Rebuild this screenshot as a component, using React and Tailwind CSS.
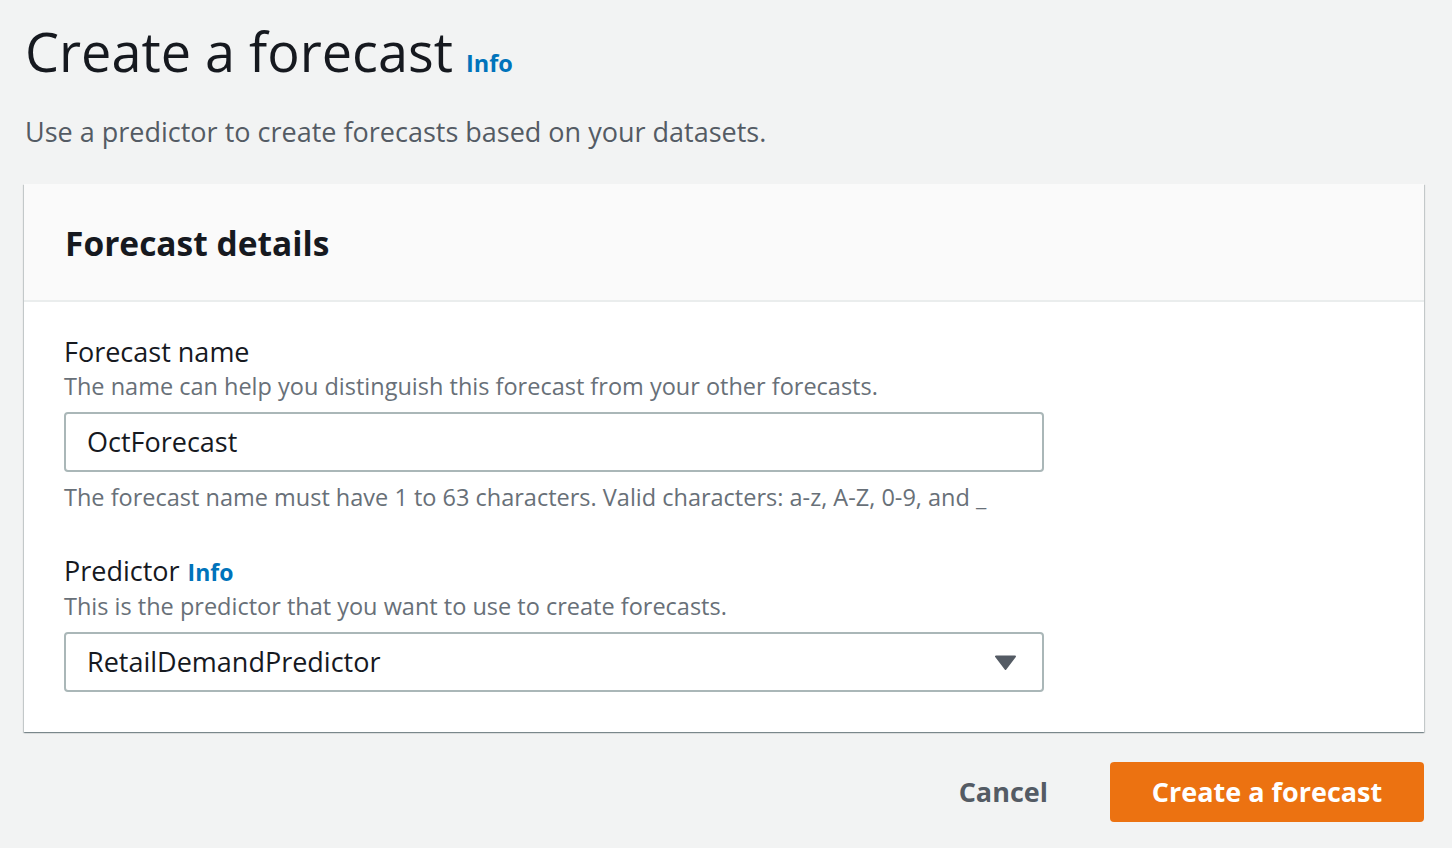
import React from 'react';

const font = { fontFamily: '"Open Sans", "Noto Sans", Arial, sans-serif' };

const InfoLink = ({ className = '' }) => (
  <a href="#" className={`font-bold text-[#0073bb] ${className}`}>Info</a>
);

const Field = ({ label, info, description, children, constraint }) => (
  <div>
    <div className="text-[27px] leading-[36px] text-[#16191f]">
      {label}
      {info && <InfoLink className="ml-[8px] text-[23px]" />}
    </div>
    <div className="text-[23.5px] leading-[32px] text-[#687078]">{description}</div>
    <div className="mt-[10px]">{children}</div>
    {constraint && (
      <div className="mt-[9px] text-[23.5px] leading-[32px] text-[#687078]">{constraint}</div>
    )}
  </div>
);

const App = () => {
  return (
    <div className="min-h-[848px] bg-[#f2f3f3] pl-[24px] pr-[28px] pt-[16px]" style={font}>
      <div className="flex items-baseline gap-[13px] pl-[1px]">
        <h1 className="text-[54px] leading-[70px] text-[#16191f]">Create a forecast</h1>
        <InfoLink className="text-[23.5px]" />
      </div>
      <p className="mt-[28px] text-[27px] leading-[36px] text-[#545b64] pl-[1px]">
        Use a predictor to create forecasts based on your datasets.
      </p>

      <div className="mt-[34px] bg-white shadow-[0_1px_1px_0_rgba(0,28,36,0.3),1px_1px_1px_0_rgba(0,28,36,0.15),-1px_1px_1px_0_rgba(0,28,36,0.15)]">
        <div className="h-[118px] bg-[#fafafa] border-b-2 border-[#eaeded] px-[41px] pt-[3px] flex items-center">
          <h2 className="text-[33.5px] font-bold text-[#16191f]">Forecast details</h2>
        </div>
        <div className="px-[40px] pt-[32px] pb-[40px] flex flex-col gap-[40px]">
          <Field
            label="Forecast name"
            description="The name can help you distinguish this forecast from your other forecasts."
            constraint="The forecast name must have 1 to 63 characters. Valid characters: a-z, A-Z, 0-9, and _"
          >
            <div className="w-[980px] h-[60px] border-2 border-[#aab7b8] rounded-[4px] px-[21px] flex items-center text-[27px] text-[#16191f]">
              OctForecast
            </div>
          </Field>
          <Field
            label="Predictor"
            info
            description="This is the predictor that you want to use to create forecasts."
          >
            <div className="w-[980px] h-[60px] border-2 border-[#aab7b8] rounded-[4px] pl-[21px] pr-[26px] flex items-center justify-between text-[27px] text-[#16191f]">
              <span>RetailDemandPredictor</span>
              <svg width="21" height="15" viewBox="0 0 21 15">
                <path d="M1 1.5 L20 1.5 L10.5 14 Z" fill="#545b64" stroke="#545b64" strokeWidth="2" strokeLinejoin="round" />
              </svg>
            </div>
          </Field>
        </div>
      </div>

      <div className="mt-[30px] flex items-center justify-end gap-[62px]">
        <button className="text-[27px] font-bold text-[#545b64]">Cancel</button>
        <button className="h-[60px] w-[314px] rounded-[4px] bg-[#ec7211] text-[27px] font-bold text-white">
          Create a forecast
        </button>
      </div>
    </div>
  );
};

export default App;
